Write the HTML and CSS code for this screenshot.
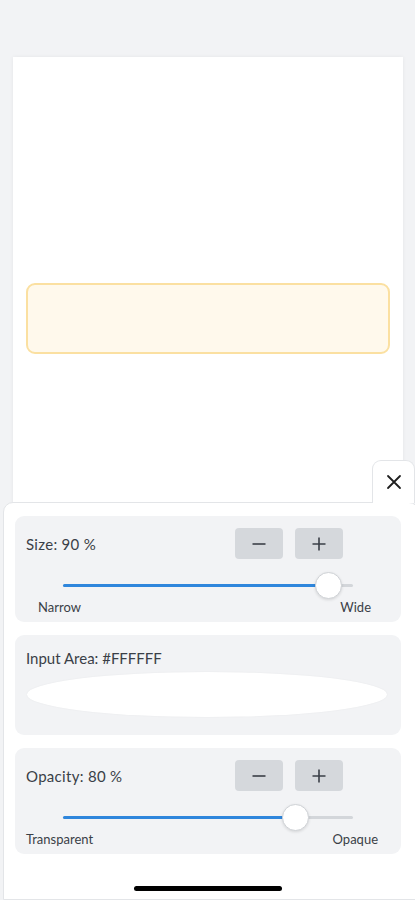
FILE: index.html
```html
<!DOCTYPE html>
<html lang="en">
<head>
<meta charset="utf-8">
<title>Settings</title>
<link rel="stylesheet" href="styles.css">
</head>
<body>
<main class="page">
  <section class="card">
    <div class="note"></div>
  </section>
</main>

<div class="sheet">
  <button class="close" aria-label="Close">
    <svg width="16" height="16" viewBox="0 0 16 16"><path d="M2 2L14 14M14 2L2 14" stroke="#1f1f1f" stroke-width="1.8" stroke-linecap="round"/></svg>
  </button>

  <div class="panel panel-size">
    <div class="head">
      <span class="label">Size: 90 %</span>
      <div class="btns">
        <button class="btn" aria-label="Decrease"><svg width="16" height="16" viewBox="0 0 16 16"><path d="M1.5 8H14.5" stroke="#3a3f47" stroke-width="1.6"/></svg></button>
        <button class="btn" aria-label="Increase"><svg width="16" height="16" viewBox="0 0 16 16"><path d="M1.5 8H14.5M8 1.5V14.5" stroke="#3a3f47" stroke-width="1.6"/></svg></button>
      </div>
    </div>
    <div class="slider">
      <div class="track"><div class="fill" style="width:91.4%"></div><div class="thumb" style="left:91.4%"></div></div>
    </div>
    <div class="ends ends-size"><span>Narrow</span><span>Wide</span></div>
  </div>

  <div class="panel panel-color">
    <span class="label">Input Area: #FFFFFF</span>
    <div class="swatch"></div>
  </div>

  <div class="panel panel-opacity">
    <div class="head">
      <span class="label">Opacity: 80 %</span>
      <div class="btns">
        <button class="btn" aria-label="Decrease"><svg width="16" height="16" viewBox="0 0 16 16"><path d="M1.5 8H14.5" stroke="#3a3f47" stroke-width="1.6"/></svg></button>
        <button class="btn" aria-label="Increase"><svg width="16" height="16" viewBox="0 0 16 16"><path d="M1.5 8H14.5M8 1.5V14.5" stroke="#3a3f47" stroke-width="1.6"/></svg></button>
      </div>
    </div>
    <div class="slider">
      <div class="track"><div class="fill" style="width:80%"></div><div class="thumb" style="left:80%"></div></div>
    </div>
    <div class="ends ends-opacity"><span>Transparent</span><span>Opaque</span></div>
  </div>

  <div class="home"></div>
</div>
</body>
</html>
```

FILE: styles.css
```css
* { box-sizing: border-box; }
html, body { margin: 0; padding: 0; }
body {
  background: #f2f3f5;
  font-family: Lato, "Open Sans", sans-serif;
  color: #3a3f47;
  width: 415px;
  height: 900px;
  overflow: hidden;
  position: relative;
}
.page {
  padding: 57px 12px 0 13px;
}
.card {
  background: #fff;
  height: 460px;
  box-shadow: 0 0 4px rgba(0,0,0,0.06);
  padding: 226px 13px 0 13px;
}
.note {
  height: 71px;
  border: 2px solid #fbe0a1;
  background: #fff9ec;
  border-radius: 9px;
}
.sheet {
  position: absolute;
  left: 3px;
  right: -4px;
  top: 502px;
  bottom: 0;
  background: #fff;
  border: 1px solid #e3e5e8;
  border-radius: 10px 10px 0 0;
  padding: 13px 17px 0 11px;
  display: flex;
  flex-direction: column;
  gap: 13px;
}
.close {
  position: absolute;
  right: 3px;
  top: -43px;
  width: 43px;
  height: 43px;
  background: #fff;
  border: 1px solid #e3e5e8;
  border-bottom: none;
  border-radius: 9px 9px 0 0;
  display: flex;
  align-items: center;
  justify-content: center;
  padding: 0;
}
.panel {
  background: #f2f3f5;
  border-radius: 9px;
}
.panel-size, .panel-opacity {
  height: 106px;
  padding: 12px 0 0 11px;
}
.head {
  display: flex;
  align-items: center;
  height: 31px;
}
.label {
  font-size: 15px;
  color: #3a3f47;
  width: 209px;
  display: block;
  letter-spacing: 0.3px;
}
.btns {
  display: flex;
  gap: 12px;
}
.btn {
  width: 48px;
  height: 31px;
  border: none;
  border-radius: 4px;
  background: #d5d8dc;
  display: flex;
  align-items: center;
  justify-content: center;
  padding: 0;
}
.slider {
  padding: 0 48px 0 37px;
  height: 26px;
  margin-top: 13px;
  display: flex;
  align-items: center;
}
.track {
  position: relative;
  flex: 1;
  height: 3px;
  background: #d3d6da;
  border-radius: 2px;
}
.fill {
  height: 3px;
  background: #2f86dc;
  border-radius: 2px;
}
.thumb {
  position: absolute;
  top: 50%;
  width: 27px;
  height: 27px;
  margin: -13.5px 0 0 -13.5px;
  border-radius: 50%;
  background: #fff;
  border: 1px solid #cfd2d6;
  box-shadow: 0 1px 3px rgba(0,0,0,0.12);
}
.ends {
  display: flex;
  justify-content: space-between;
  font-size: 13px;
  color: #3a3f47;
  margin-top: 1px;
}
.ends-size { padding: 0 30px 0 12px; }
.ends-opacity { padding: 0 23px 0 0; }
.panel-color {
  height: 100px;
  padding: 14px 14px 0 12px;
}
.panel-color .label { width: auto; margin-left: -1px; letter-spacing: 0; }
.swatch {
  margin-top: 5px;
  height: 45px;
  background: #fff;
  border-radius: 50%;
  box-shadow: 0 0 2px rgba(0,0,0,0.05);
}
.home {
  margin: auto auto 8px auto;
  width: 148px;
  height: 5px;
  background: #000;
  border-radius: 3px;
}
```
